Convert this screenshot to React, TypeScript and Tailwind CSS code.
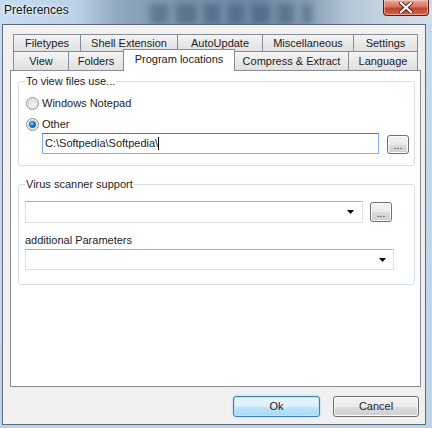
import React from "react";

function Radio({ checked }: { checked?: boolean }) {
  return (
    <svg width="13" height="13" viewBox="0 0 13 13" className="shrink-0">
      <defs>
        <linearGradient id={checked ? "rg1" : "rg0"} x1="0" y1="0" x2="1" y2="1">
          <stop offset="0" stopColor="#dcdcdc" />
          <stop offset="1" stopColor="#fbfbfb" />
        </linearGradient>
        <radialGradient id="dot" cx="0.4" cy="0.35" r="0.7">
          <stop offset="0" stopColor="#8fd1ff" />
          <stop offset="0.5" stopColor="#1f86d0" />
          <stop offset="1" stopColor="#0d4e86" />
        </radialGradient>
      </defs>
      <circle cx="6.5" cy="6.5" r="6" fill="#f2f2f2" stroke="#8e8f8f" strokeWidth="1" />
      <circle cx="6.5" cy="6.5" r="4.5" fill={`url(#${checked ? "rg1" : "rg0"})`} stroke="#c7c7c7" strokeWidth="0.6" />
      {checked && <circle cx="6.5" cy="6.5" r="3.2" fill="url(#dot)" stroke="#24527a" strokeWidth="0.5" />}
    </svg>
  );
}

function Arrow() {
  return (
    <svg width="7" height="4" viewBox="0 0 7 4" className="shrink-0">
      <polygon points="0,0 7,0 3.5,4" fill="#000" />
    </svg>
  );
}

function SmallBtn({ w, h }: { w: string; h: string }) {
  return (
    <div
      className={`${w} ${h} shrink-0 rounded-[3px] border border-[#707070] bg-[linear-gradient(to_bottom,#f2f2f2_0%,#ebebeb_50%,#dddddd_51%,#cfcfcf_100%)] shadow-[inset_0_0_0_1px_#fcfcfc] flex items-end justify-center pb-[2px] text-[10px] leading-[10px]`}
    >
      ...
    </div>
  );
}

function Tab({ w, label }: { w: string; label: string }) {
  return (
    <div
      className={`${w} -ml-px first:ml-0 h-full border border-b-0 border-[#898c95] bg-[linear-gradient(to_bottom,#f4f4f4,#e0e0e0)] flex items-center justify-center whitespace-nowrap`}
    >
      {label}
    </div>
  );
}

export default function App() {
  return (
    <div className="w-[432px] h-[428px] overflow-hidden bg-[linear-gradient(to_bottom,#c9dcee,#bcd3e8)] font-['Liberation_Sans',Arial,sans-serif] text-[11px] leading-[13px] text-[#1c1c1c] flex flex-col">
      {/* title bar */}
      <div className="relative h-[24px] shrink-0 overflow-hidden bg-[linear-gradient(to_right,#c6dcf0_0%,#b9d0e6_18%,#8ea6be_28%,#7790aa_45%,#6e88a4_60%,#8aa1b7_72%,#b2c4d5_80%,#c8d6e2_90%,#d2dfea_100%)]">
        <svg className="absolute left-0 top-0 blur-[3px] opacity-40" width="432" height="24">
          <rect x="150" y="4" width="18" height="22" fill="#2c4566" />
          <rect x="176" y="4" width="20" height="22" fill="#2c4566" />
          <rect x="204" y="4" width="16" height="22" fill="#2c4566" />
          <rect x="228" y="4" width="16" height="22" fill="#2c4566" />
          <rect x="252" y="4" width="18" height="22" fill="#2c4566" />
          <rect x="278" y="4" width="16" height="22" fill="#2c4566" />
          <rect x="302" y="4" width="10" height="22" fill="#2c4566" />
        </svg>
        <div className="absolute left-[4px] top-[3px] text-[12px] leading-[14px] text-[#111] [text-shadow:0_0_6px_#ffffff,0_0_3px_#ffffff]">
          Preferences
        </div>
        <div className="absolute left-[383px] top-0 w-[46px] h-[16px] rounded-b-[4px] border border-t-0 border-[#5a1d14] bg-[linear-gradient(to_bottom,#e8a99c_0%,#d67260_45%,#c2432c_55%,#d4664c_100%)] shadow-[inset_0_0_0_1px_rgba(255,220,210,0.5)] flex items-center justify-center">
          <svg width="14" height="11" viewBox="0 0 14 11">
            <path d="M2 1 L12 10 M12 1 L2 10" stroke="#5b1a10" strokeWidth="4" strokeLinecap="square" />
            <path d="M2 1 L12 10 M12 1 L2 10" stroke="#ffffff" strokeWidth="2.2" strokeLinecap="square" />
          </svg>
        </div>
      </div>

      {/* client area */}
      <div className="ml-[2px] w-[424px] h-[401px] shrink-0 border border-[#5f6b78] bg-[#f0f0f0] flex flex-col">
        {/* tabs */}
        <div className="pt-[9px] pl-[10px] flex flex-col">
          <div className="flex h-[17px]">
            <Tab w="w-[68px]" label="Filetypes" />
            <Tab w="w-[98px]" label="Shell Extension" />
            <Tab w="w-[86px]" label="AutoUpdate" />
            <Tab w="w-[92px]" label="Miscellaneous" />
            <Tab w="w-[65px]" label="Settings" />
          </div>
          <div className="flex h-[19px]">
            <Tab w="w-[56px]" label="View" />
            <Tab w="w-[56px]" label="Folders" />
            <div className="relative z-10 -ml-px w-[112px] h-[22px] -mt-[2px] border border-b-0 border-[#898c95] bg-white flex items-start justify-center pt-[3px] whitespace-nowrap">
              Program locations
            </div>
            <Tab w="w-[115px]" label="Compress & Extract" />
            <Tab w="w-[70px]" label="Language" />
          </div>
        </div>

        {/* panel */}
        <div className="ml-[7px] w-[411px] h-[317px] shrink-0 border border-[#898c95] bg-white flex flex-col">
          {/* group 1 */}
          <div className="relative ml-[7px] mt-[10px] w-[397px] h-[85px] shrink-0 rounded-[3px] border border-[#d5dfe5] flex flex-col">
            <span className="absolute left-[6px] -top-[7px] px-[1px] bg-white">To view files use...</span>
            <div className="ml-[7px] mt-[15px] flex items-center gap-[3px] h-[13px]">
              <Radio />
              <span>Windows Notepad</span>
            </div>
            <div className="ml-[7px] mt-[8px] flex items-center gap-[3px] h-[13px]">
              <Radio checked />
              <span>Other</span>
            </div>
            <div className="ml-[23px] mt-[2px] flex items-start">
              <div className="w-[337px] h-[21px] border border-[#7eb4ea] border-t-[#3c7fb1] flex items-center pl-[2px] bg-white">
                <span>C:\Softpedia\Softpedia\</span>
                <span className="inline-block w-px h-[13px] bg-black" />
              </div>
              <div className="ml-[8px] mt-[2px]">
                <SmallBtn w="w-[22px]" h="h-[19px]" />
              </div>
            </div>
          </div>

          {/* group 2 */}
          <div className="relative ml-[7px] mt-[18px] w-[397px] h-[101px] shrink-0 rounded-[3px] border border-[#d5dfe5] flex flex-col">
            <span className="absolute left-[6px] -top-[7px] px-[1px] bg-white">Virus scanner support</span>
            <div className="ml-[6px] mt-[16px] flex items-start">
              <div className="w-[338px] h-[22px] border border-[#dfe2e7] border-t-[#abadb3] flex items-center justify-end pr-[8px] bg-white">
                <Arrow />
              </div>
              <div className="ml-[7px] mt-[1px]">
                <SmallBtn w="w-[22px]" h="h-[20px]" />
              </div>
            </div>
            <div className="ml-[6px] mt-[11px] h-[13px]">additional Parameters</div>
            <div className="ml-[6px] mt-[2px] w-[369px] h-[21px] border border-[#dfe2e7] border-t-[#abadb3] flex items-center justify-end pr-[7px] bg-white">
              <Arrow />
            </div>
          </div>
        </div>

        {/* buttons */}
        <div className="mt-[9px] pr-[6px] flex justify-end gap-[13px]">
          <div className="w-[87px] h-[21px] rounded-[3px] border border-[#3c7fb1] bg-[linear-gradient(to_bottom,#eaf6fd_0%,#d9f0fc_50%,#bee6fd_51%,#a7d9f5_100%)] shadow-[inset_0_0_0_1px_#c4e5f6,0_0_2px_#8fcdf0] flex items-center justify-center">
            Ok
          </div>
          <div className="w-[86px] h-[21px] rounded-[3px] border border-[#707070] bg-[linear-gradient(to_bottom,#f2f2f2_0%,#ebebeb_50%,#dddddd_51%,#cfcfcf_100%)] shadow-[inset_0_0_0_1px_#fcfcfc] flex items-center justify-center">
            Cancel
          </div>
        </div>
      </div>
    </div>
  );
}
